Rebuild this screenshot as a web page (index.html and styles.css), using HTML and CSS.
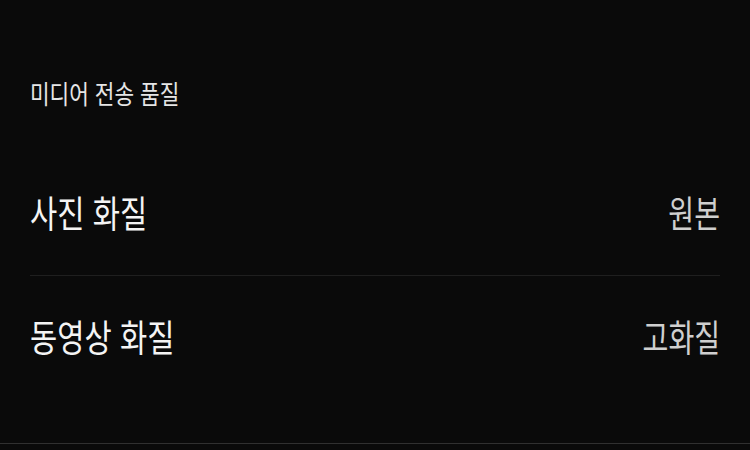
FILE: index.html
```html
<!DOCTYPE html>
<html lang="ko">
<head>
    <meta charset="UTF-8">
    <meta name="viewport" content="width=device-width, initial-scale=1.0">
    <title>미디어 전송 품질</title>
    <link rel="stylesheet" href="styles.css">
</head>
<body>

    <div class="settings">
        <div class="section-title"><span class="narrow">미디어 전송 품질</span></div>

        <div class="row">
            <span class="label narrow">사진 화질</span>
            <span class="value narrow">원본</span>
        </div>

        <div class="row">
            <span class="label narrow">동영상 화질</span>
            <span class="value narrow">고화질</span>
        </div>
    </div>

    <div class="bottom-bar"></div>

</body>
</html>
```

FILE: styles.css
```css
body {
    margin: 0;
    background-color: #0a0a0a;
    font-family: "Noto Sans CJK KR", "Noto Sans", sans-serif;
    color: #f2f2f2;
    height: 450px;
    overflow: hidden;
}

.settings {
    padding: 0 30px;
}

.narrow {
    display: inline-block;
    transform: scaleX(0.8);
    transform-origin: left center;
    white-space: nowrap;
}

.section-title {
    padding-top: 78px;
    padding-bottom: 45px;
    height: 30px;
    line-height: 30px;
    font-size: 26px;
    color: #e6e6e6;
}

.section-title .narrow {
    transform: scaleX(0.82);
}

.row {
    display: flex;
    justify-content: space-between;
    align-items: center;
    height: 118px;
    padding-bottom: 4px;
    font-size: 37px;
}

.row + .row {
    border-top: 1px solid #1f1f1f;
    height: 120px;
}

.label {
    color: #f4f4f4;
}

.value {
    color: #cfcfcf;
    transform: scaleX(0.76);
    transform-origin: right center;
}

.bottom-bar {
    margin-top: 43px;
    border-top: 1px solid #303030;
}
```
